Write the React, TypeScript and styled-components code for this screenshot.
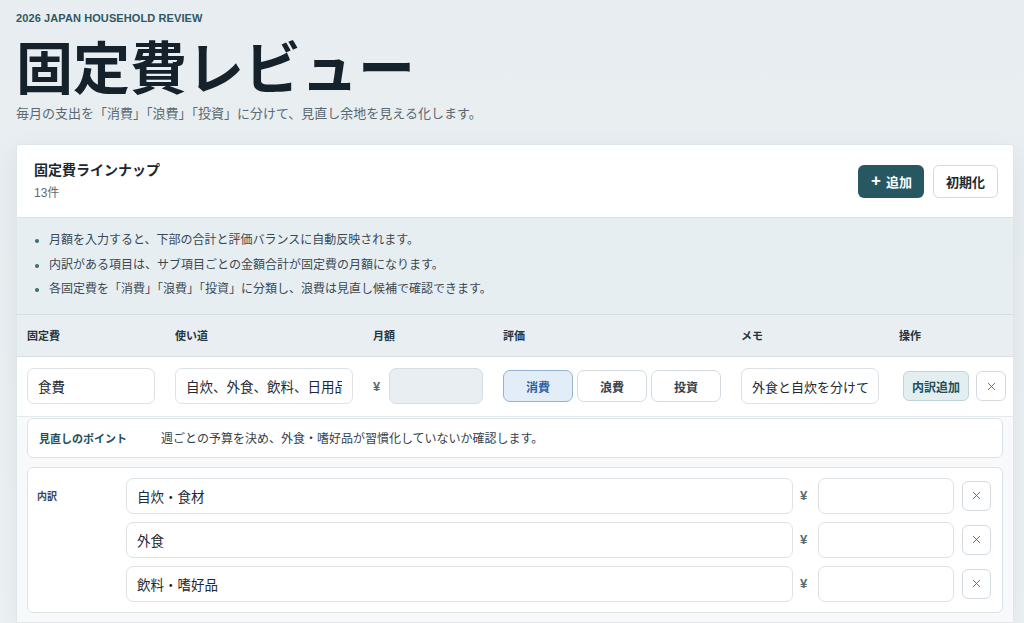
import styled, { createGlobalStyle } from "styled-components";
import { X } from "lucide-react";

type Rating = "消費" | "浪費" | "投資";

const ratings: Rating[] = ["消費", "浪費", "投資"];

const notes = [
  "月額を入力すると、下部の合計と評価バランスに自動反映されます。",
  "内訳がある項目は、サブ項目ごとの金額合計が固定費の月額になります。",
  "各固定費を「消費」「浪費」「投資」に分類し、浪費は見直し候補で確認できます。",
];

const items = [
  {
    name: "食費",
    purpose: "自炊、外食、飲料、日用品",
    rating: "消費" as Rating,
    memo: "外食と自炊を分けて",
    point: "週ごとの予算を決め、外食・嗜好品が習慣化していないか確認します。",
    breakdown: ["自炊・食材", "外食", "飲料・嗜好品"],
  },
];

const GlobalStyle = createGlobalStyle`
  html, body {
    margin: 0;
    padding: 0;
    overflow: hidden;
  }
  body {
    font-family: "Liberation Sans", "Noto Sans CJK JP", sans-serif;
    background: linear-gradient(180deg, #e7edf0 0%, #eef2f4 100%);
    color: #1d2a33;
  }
  * {
    box-sizing: border-box;
  }
`;

const App = () => {
  return (
    <>
      <GlobalStyle />
      <Page>
        <Eyebrow>2026 JAPAN HOUSEHOLD REVIEW</Eyebrow>
        <Title>固定費レビュー</Title>
        <Lead>毎月の支出を「消費」「浪費」「投資」に分けて、見直し余地を見える化します。</Lead>

        <Card>
          <CardHeader>
            <div>
              <CardTitle>固定費ラインナップ</CardTitle>
              <Count>13件</Count>
            </div>
            <Actions>
              <PrimaryButton>
                <Plus>+</Plus>追加
              </PrimaryButton>
              <GhostButton>初期化</GhostButton>
            </Actions>
          </CardHeader>

          <Notes>
            {notes.map((n) => (
              <li key={n}>{n}</li>
            ))}
          </Notes>

          <HeadRow>
            <span>固定費</span>
            <span>使い道</span>
            <span>月額</span>
            <span>評価</span>
            <span>メモ</span>
            <span>操作</span>
          </HeadRow>

          {items.map((item) => (
            <div key={item.name}>
              <ItemRow>
                <TextInput defaultValue={item.name} />
                <TextInput defaultValue={item.purpose} />
                <AmountCell>
                  <Yen>¥</Yen>
                  <TextInput $disabled readOnly />
                </AmountCell>
                <RatingGroup>
                  {ratings.map((r) => (
                    <RatingButton key={r} $active={r === item.rating}>
                      {r}
                    </RatingButton>
                  ))}
                </RatingGroup>
                <TextInput $small defaultValue={item.memo} />
                <OpCell>
                  <SoftButton>内訳追加</SoftButton>
                  <IconButton>
                    <X size={13} strokeWidth={1.6} />
                  </IconButton>
                </OpCell>
              </ItemRow>
              <Detail>
                <PointBox>
                  <PointLabel>見直しのポイント</PointLabel>
                  <PointText>{item.point}</PointText>
                </PointBox>
                {item.breakdown.length > 0 && (
                  <BreakdownBox>
                    <BreakdownLabel>内訳</BreakdownLabel>
                    <BreakdownList>
                      {item.breakdown.map((b) => (
                        <SubRow key={b}>
                          <TextInput defaultValue={b} />
                          <SubYen>¥</SubYen>
                          <SubAmount />
                          <IconButton $sub>
                            <X size={13} strokeWidth={1.6} />
                          </IconButton>
                        </SubRow>
                      ))}
                    </BreakdownList>
                  </BreakdownBox>
                )}
              </Detail>
            </div>
          ))}
        </Card>
      </Page>
    </>
  );
};

const Page = styled.div`
  padding: 10px 10px 0 16px;
`;

const Eyebrow = styled.div`
  font-size: 11px;
  line-height: 16px;
  font-weight: 700;
  color: #2f5962;
  letter-spacing: 0.1px;
`;

const Title = styled.h1`
  margin: 3px 0 0;
  font-family: "Noto Sans CJK JP", sans-serif;
  font-size: 57px;
  line-height: 70px;
  font-weight: 700;
  color: #15222b;
`;

const Lead = styled.p`
  margin: 5px 0 0;
  font-size: 13px;
  line-height: 20px;
  color: #5a6972;
`;

const Card = styled.section`
  margin-top: 20px;
  width: 998px;
  background: #ffffff;
  border: 1px solid #dfe6ea;
  border-radius: 3px;
  box-shadow: 0 10px 28px rgba(30, 55, 70, 0.08);
`;

const CardHeader = styled.div`
  display: flex;
  align-items: center;
  justify-content: space-between;
  padding: 15px 15px 15px 17px;
  border-bottom: 1px solid #d9e1e6;
`;

const CardTitle = styled.div`
  font-size: 14px;
  line-height: 20px;
  font-weight: 700;
  color: #1b2730;
`;

const Count = styled.div`
  margin-top: 4px;
  font-size: 12px;
  line-height: 18px;
  color: #5f6b74;
`;

const Actions = styled.div`
  display: flex;
  gap: 9px;
`;

const PrimaryButton = styled.button`
  display: flex;
  align-items: center;
  gap: 5px;
  height: 33px;
  padding: 0 12px 0 13px;
  border: 0;
  border-radius: 6px;
  background: #275862;
  color: #ffffff;
  font-family: inherit;
  font-size: 13px;
  font-weight: 700;
`;

const Plus = styled.span`
  font-size: 17px;
  line-height: 1;
  font-weight: 700;
  margin-top: -2px;
`;

const GhostButton = styled.button`
  height: 33px;
  padding: 0 12px;
  border: 1px solid #d3dbe0;
  border-radius: 6px;
  background: #ffffff;
  color: #1d2a33;
  font-family: inherit;
  font-size: 13px;
  font-weight: 700;
`;

const Notes = styled.ul`
  margin: 0;
  padding: 10px 16px 12px 32px;
  background: #e6eef2;
  border-bottom: 1px solid #d6dfe4;
  font-size: 12px;
  line-height: 24.5px;
  color: #3a4852;

  li::marker {
    color: #3e6a73;
  }
`;

const columns = "128px 178px 110px 218px 138px 1fr";

const HeadRow = styled.div`
  display: grid;
  grid-template-columns: ${columns};
  column-gap: 20px;
  align-items: center;
  height: 42px;
  padding: 0 10px;
  background: #e8eef2;
  border-bottom: 1px solid #d6dfe4;
  font-size: 11px;
  font-weight: 700;
  color: #27343d;
`;

const ItemRow = styled.div`
  display: grid;
  grid-template-columns: ${columns};
  column-gap: 20px;
  align-items: center;
  height: 60px;
  padding: 0 10px;
  border-bottom: 1px solid #e4e9ec;
`;

const TextInput = styled.input<{ $disabled?: boolean; $small?: boolean }>`
  width: 100%;
  min-width: 0;
  height: 36px;
  padding: 0 10px;
  border: 1px solid ${(p) => (p.$disabled ? "#d6dfe5" : "#dce2e6")};
  border-radius: 7px;
  background: ${(p) => (p.$disabled ? "#e8eef2" : "#ffffff")};
  color: #1d2a33;
  font-family: "Noto Sans CJK JP", sans-serif;
  font-size: ${(p) => (p.$small ? "13px" : "13.5px")};
  outline: none;
`;

const AmountCell = styled.div`
  display: flex;
  align-items: center;
  gap: 6px;
`;

const Yen = styled.span`
  flex: none;
  width: 10px;
  font-size: 13px;
  font-weight: 700;
  color: #5b6770;
`;

const SubYen = styled(Yen)`
  margin: 0 3px 0 2px;
`;

const RatingGroup = styled.div`
  display: flex;
  gap: 4px;
`;

const RatingButton = styled.button<{ $active?: boolean }>`
  flex: 1;
  height: 32px;
  border: 1px solid ${(p) => (p.$active ? "#93b3d4" : "#d3dbe0")};
  border-radius: 7px;
  background: ${(p) => (p.$active ? "#e2edf8" : "#ffffff")};
  color: ${(p) => (p.$active ? "#2f62a0" : "#33414b")};
  font-family: inherit;
  font-size: 12px;
  font-weight: 700;
`;

const OpCell = styled.div`
  display: flex;
  align-items: center;
  gap: 7px;
  padding-left: 4px;
`;

const SoftButton = styled.button`
  height: 30px;
  padding: 0 8px;
  border: 1px solid #bfd2d6;
  border-radius: 6px;
  background: #e3eef0;
  color: #22505a;
  font-family: inherit;
  font-size: 12px;
  font-weight: 700;
  white-space: nowrap;
`;

const IconButton = styled.button<{ $sub?: boolean }>`
  display: flex;
  align-items: center;
  justify-content: center;
  flex: none;
  width: ${(p) => (p.$sub ? "29px" : "30px")};
  height: 30px;
  padding: 0;
  border: 1px solid #d3dbe0;
  border-radius: 6px;
  background: #ffffff;
  color: #4f5c66;
`;

const Detail = styled.div`
  display: flex;
  flex-direction: column;
  gap: 9px;
  padding: 0 10px 9px 10px;
  background: #f7f9fa;
  border-bottom: 1px solid #e1e7eb;
`;

const PointBox = styled.div`
  display: flex;
  align-items: center;
  height: 40px;
  margin-top: 1px;
  padding: 0 11px;
  background: #ffffff;
  border: 1px solid #dce3e7;
  border-radius: 6px;
`;

const PointLabel = styled.span`
  width: 122px;
  flex: none;
  font-size: 11px;
  font-weight: 700;
  color: #24505a;
`;

const PointText = styled.span`
  font-size: 12px;
  color: #34424c;
`;

const BreakdownBox = styled.div`
  display: flex;
  padding: 10px 11px 10px 9px;
  background: #ffffff;
  border: 1px solid #dce3e7;
  border-radius: 6px;
`;

const BreakdownLabel = styled.div`
  width: 89px;
  flex: none;
  padding-top: 10px;
  font-size: 10px;
  font-weight: 700;
  color: #3a4852;
`;

const BreakdownList = styled.div`
  flex: 1;
  display: flex;
  flex-direction: column;
  gap: 8px;
`;

const SubRow = styled.div`
  display: flex;
  align-items: center;
  gap: 5px;
`;

const SubAmount = styled(TextInput)`
  width: 136px;
  flex: none;
  margin-right: 3px;
`;

export default App;
